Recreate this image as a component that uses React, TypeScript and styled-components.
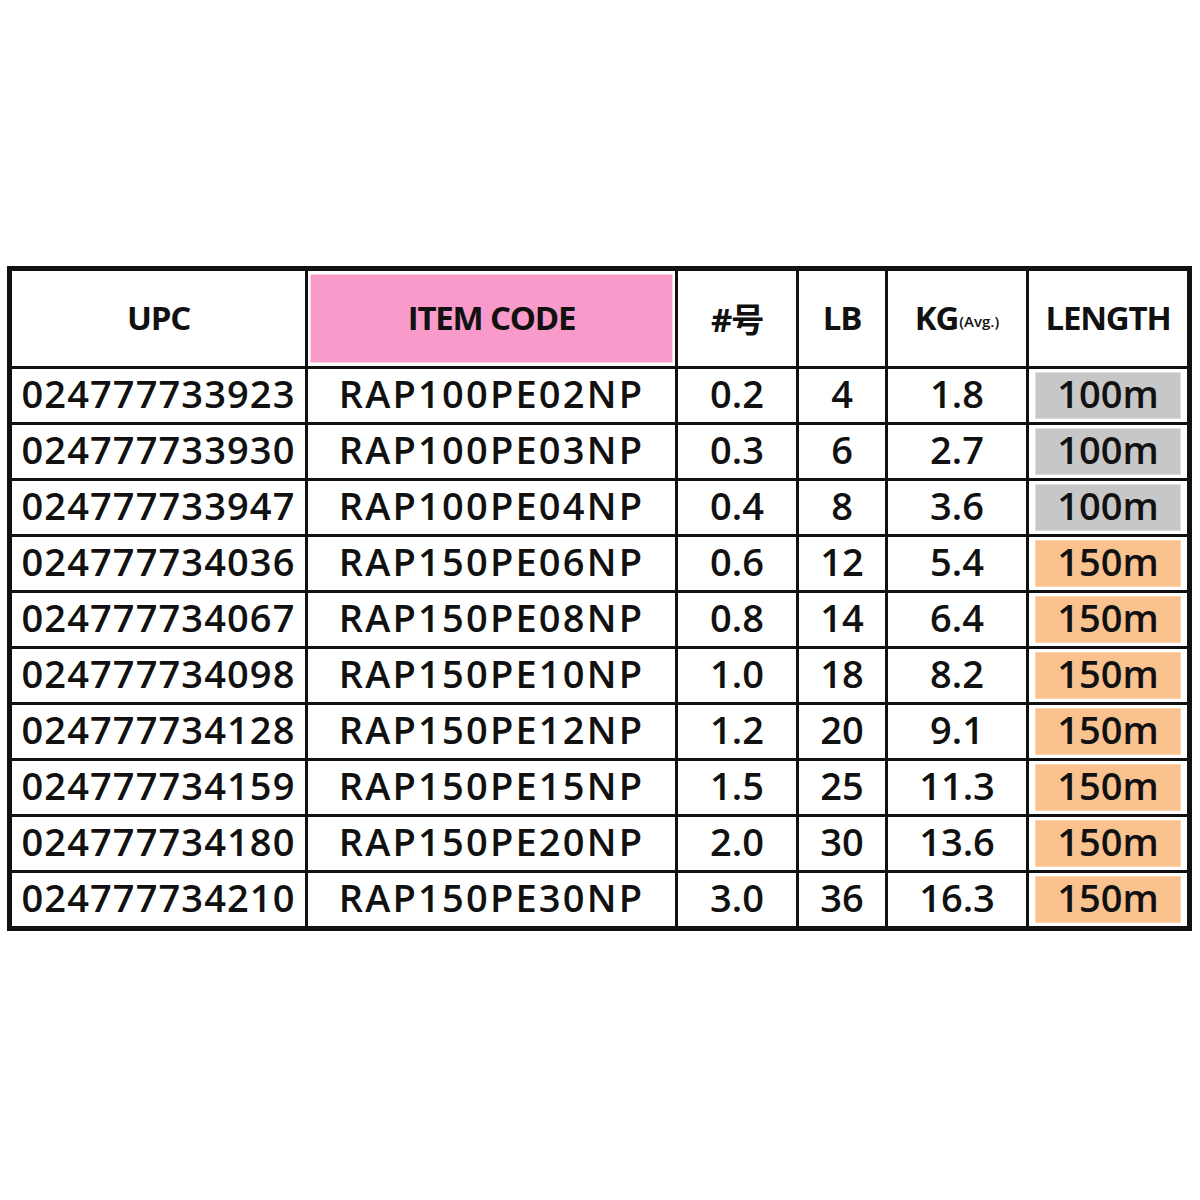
import React from "react";
import styled, { createGlobalStyle } from "styled-components";

const Global = createGlobalStyle`
  html, body { margin: 0; padding: 0; background: #ffffff; }
  body { font-family: "Open Sans", "Noto Sans CJK JP", sans-serif; color: #111; }
`;

const Page = styled.div`
  width: 1200px;
  height: 1200px;
  box-sizing: border-box;
  padding: 266px 0 0 7px;
  background: #fff;
`;

const Table = styled.table`
  border-collapse: collapse;
  width: 1180px;
  table-layout: fixed;
  border: 5px solid #111;
`;

const Col = styled.col<{ $w: number }>`
  width: ${(p) => p.$w}px;
`;

const HeadCell = styled.th`
  height: 95px;
  border: 3px solid #111;
  padding: 0;
  font-weight: 700;
  font-size: 33px;
  letter-spacing: -1.2px;
  text-align: center;
  vertical-align: middle;
  background: #fff;
`;

const HeadFill = styled.div<{ $pink?: boolean }>`
  height: 89px;
  margin: 2px;
  display: flex;
  align-items: center;
  justify-content: center;
  background: ${(p) => (p.$pink ? "#f99bca" : "transparent")};
  box-shadow: ${(p) => (p.$pink ? "inset 0 0 0 1px #fcd3e6" : "none")};
  padding-bottom: 2px;
  box-sizing: border-box;
`;

const Small = styled.span`
  font-size: 15px;
  letter-spacing: 0;
  font-weight: 600;
  margin-left: 1px;
  position: relative;
  top: 3px;
`;

const Cell = styled.td`
  height: 48px;
  border: 3px solid #111;
  padding: 0 0 5px 0;
  font-size: 38px;
  font-weight: 600;
  text-align: center;
  vertical-align: middle;
  line-height: 1;
  white-space: nowrap;
`;

const Upc = styled(Cell)`
  letter-spacing: 1.1px;
`;

const Code = styled(Cell)`
  letter-spacing: 2.2px;
`;

const LengthCell = styled(Cell)`
  height: 53px;
  padding: 0;
`;

const Fill = styled.div<{ $kind: "grey" | "orange" }>`
  margin: 3px 6px 3px 6px;
  height: 47px;
  padding-bottom: 5px;
  box-sizing: border-box;
  display: flex;
  align-items: center;
  justify-content: center;
  background: ${(p) => (p.$kind === "grey" ? "#c7c7c7" : "#f9c28f")};
  box-shadow: inset 0 0 0 1px ${(p) => (p.$kind === "grey" ? "#dcdcdc" : "#fbd7b0")};
`;

type Row = [string, string, string, string, string, string];

const rows: Row[] = [
  ["024777733923", "RAP100PE02NP", "0.2", "4", "1.8", "100m"],
  ["024777733930", "RAP100PE03NP", "0.3", "6", "2.7", "100m"],
  ["024777733947", "RAP100PE04NP", "0.4", "8", "3.6", "100m"],
  ["024777734036", "RAP150PE06NP", "0.6", "12", "5.4", "150m"],
  ["024777734067", "RAP150PE08NP", "0.8", "14", "6.4", "150m"],
  ["024777734098", "RAP150PE10NP", "1.0", "18", "8.2", "150m"],
  ["024777734128", "RAP150PE12NP", "1.2", "20", "9.1", "150m"],
  ["024777734159", "RAP150PE15NP", "1.5", "25", "11.3", "150m"],
  ["024777734180", "RAP150PE20NP", "2.0", "30", "13.6", "150m"],
  ["024777734210", "RAP150PE30NP", "3.0", "36", "16.3", "150m"],
];

export default function App() {
  return (
    <>
      <Global />
      <Page>
        <Table>
          <colgroup>
            <Col $w={297} />
            <Col $w={370} />
            <Col $w={121} />
            <Col $w={89} />
            <Col $w={141} />
            <Col $w={162} />
          </colgroup>
          <thead>
            <tr>
              <HeadCell><HeadFill>UPC</HeadFill></HeadCell>
              <HeadCell><HeadFill $pink>ITEM CODE</HeadFill></HeadCell>
              <HeadCell><HeadFill>#号</HeadFill></HeadCell>
              <HeadCell><HeadFill>LB</HeadFill></HeadCell>
              <HeadCell><HeadFill>KG<Small>(Avg.)</Small></HeadFill></HeadCell>
              <HeadCell><HeadFill>LENGTH</HeadFill></HeadCell>
            </tr>
          </thead>
          <tbody>
            {rows.map((r) => (
              <tr key={r[0]}>
                <Upc>{r[0]}</Upc>
                <Code>{r[1]}</Code>
                <Cell>{r[2]}</Cell>
                <Cell>{r[3]}</Cell>
                <Cell>{r[4]}</Cell>
                <LengthCell>
                  <Fill $kind={r[5] === "100m" ? "grey" : "orange"}>{r[5]}</Fill>
                </LengthCell>
              </tr>
            ))}
          </tbody>
        </Table>
      </Page>
    </>
  );
}
